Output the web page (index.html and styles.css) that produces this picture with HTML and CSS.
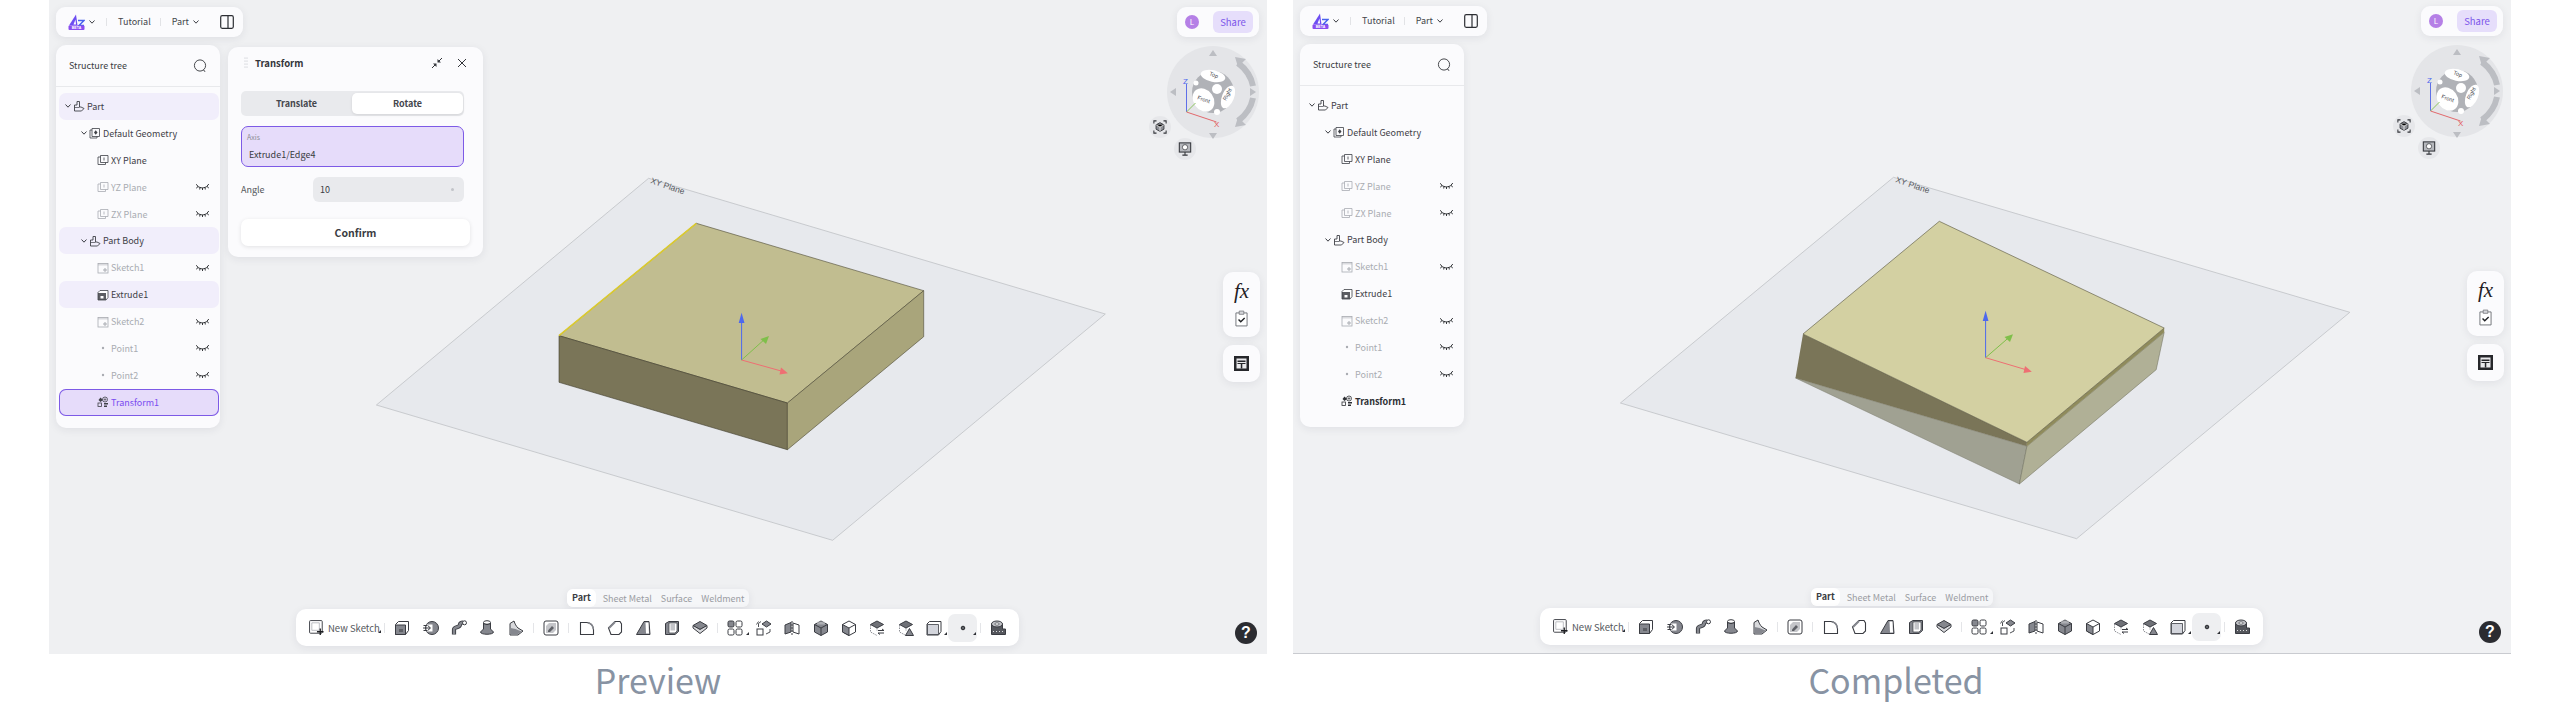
FILE: index.html
```html
<!DOCTYPE html>
<html lang="en">
<head>
<meta charset="utf-8">
<title>Transform preview and completed</title>
<link rel="stylesheet" href="styles.css">
</head>
<body>
<svg class="defs" aria-hidden="true">
  <symbol id="chev" viewBox="0 0 10 10"><path d="M2.5 3.5 5 6.2l2.5-2.7" fill="none" stroke="#3c3e44" stroke-width="1"/></symbol>
  <symbol id="panel" viewBox="0 0 14 14"><rect x=".7" y=".7" width="12.600" height="12.600" rx="1.500" fill="none" stroke="#2d2f34" stroke-width="1.200"/><path d="M8 1v12" stroke="#2d2f34" stroke-width="1.200"/></symbol>
  <symbol id="search" viewBox="0 0 14 14"><circle cx="7" cy="6.500" r="5.600" fill="none" stroke="#33353a" stroke-width=".9"/><path d="m10.500 10.800 1.500 2" stroke="#33353a"/></symbol>
  <symbol id="i-part" viewBox="0 0 12 12"><path d="M1.500 11V5H4V1.500h2.500V7H8l3 1.500L8.500 11z" fill="none" stroke="currentColor" stroke-width=".9"/><path d="M1.500 7.500h5" stroke="currentColor" stroke-width=".7"/></symbol>
  <symbol id="i-geo" viewBox="0 0 12 12"><path d="M3 1.500h7.500v8H3zM1 3h2M1 3v8h7v-1.500" fill="none" stroke="currentColor" stroke-width=".8"/><path d="M5 5.500 6.700 3.200 8.500 5.500 6.700 7.800z" fill="currentColor"/></symbol>
  <symbol id="i-plane" viewBox="0 0 12 12"><path d="M3.500 1.500h7.500v7H3.500zM3.500 3H1v7.500h7.500V8.500" fill="none" stroke="currentColor" stroke-width=".8"/><path d="M7 3.500v3" stroke="currentColor" stroke-width=".8"/></symbol>
  <symbol id="i-sketch" viewBox="0 0 12 12"><rect x="1" y="1.500" width="10" height="9.500" fill="none" stroke="currentColor" stroke-width=".8"/><path d="M1 1.500h10v2H1z" fill="currentColor" opacity=".4"/><path d="M8 6v4M6 8h4" stroke="currentColor"/></symbol>
  <symbol id="i-extrude" viewBox="0 0 12 12"><path d="M1 3.500 3 1.500h8v7l-2 2.500H1z" fill="#fff" stroke="currentColor" stroke-width=".8"/><path d="M1 4h8v7H1z" fill="currentColor" opacity=".85"/><path d="M3.500 7h3v2.500h-3z" fill="#fff"/></symbol>
  <symbol id="i-point" viewBox="0 0 12 12"><circle cx="6" cy="6" r="1.200" fill="currentColor"/></symbol>
  <symbol id="i-transform" viewBox="0 0 12 12"><circle cx="8" cy="3.500" r="2.500" fill="none" stroke="currentColor" stroke-width=".8"/><path d="M6.500 3.500h3M8 2v3" stroke="currentColor" stroke-width=".6"/><rect x="1" y="7" width="3.500" height="3.500" fill="none" stroke="currentColor" stroke-width=".8"/><path d="M3.500 1.500 6 4 3.500 6 1.500 4z" fill="currentColor"/><path d="M7 7h4v1.500H7zM7 9.500h3V11H7z" fill="currentColor"/></symbol>
  <symbol id="eye" viewBox="0 0 13 8"><path d="M1.500 3.200C4.500 5.400 8.500 5.400 11.500 3" fill="none" stroke="#1d1f23" stroke-width=".9"/><path d="M.2 1.200 2 3.400M.2 5.200 2 3.600M4 4.500 3.700 6.500M6.500 5V7M9 4.500 9.300 6.500M12.800 1 11 3.200M12.800 5 11 3.500" stroke="#1d1f23" stroke-width=".9"/></symbol>
  <symbol id="grip" viewBox="0 0 4 12"><g fill="#b9bcc2"><circle cx="1" cy="1" r=".6"/><circle cx="3" cy="1" r=".6"/><circle cx="1" cy="4" r=".6"/><circle cx="3" cy="4" r=".6"/><circle cx="1" cy="7" r=".6"/><circle cx="3" cy="7" r=".6"/><circle cx="1" cy="10" r=".6"/><circle cx="3" cy="10" r=".6"/></g></symbol>
  <symbol id="shrink" viewBox="0 0 12 12"><path d="m1 11 3.500-3.500M11 1 7.500 4.500" stroke="#33353a"/><path d="M2 6.500h3.500V10zM10 5.500H6.500V2z" fill="#33353a"/></symbol>
  <symbol id="close" viewBox="0 0 10 10"><path d="m1 1 8 8M9 1 1 9" stroke="#33353a" stroke-width="1"/></symbol>
  <symbol id="clip" viewBox="0 0 14 18"><path d="M1 3h12v14H1z" fill="#fff" stroke="#6e7076" stroke-width="1"/><path d="M4.500 1h5v3.500h-5z" fill="#d5d6da" stroke="#6e7076" stroke-width=".8"/><path d="m3.800 10 2.400 2.500 4.200-4" fill="none" stroke="#1f2024" stroke-width="1.500"/></symbol>
  <symbol id="table" viewBox="0 0 15 15"><rect width="15" height="15" fill="#26272b"/><path d="M2.500 2.500h10v10h-10z" fill="#e9e9ec"/><path d="M3.500 4.500h8V6h-8zM3.500 7h8v1h-8zM6.800 7h1.500v5.500H6.800z" fill="#26272b"/></symbol>
  <symbol id="fix" viewBox="0 0 16 16"><path d="M1 4V1h3M12 1h3v3M15 12v3h-3M4 15H1v-3" fill="none" stroke="#33353a" stroke-width="1.200"/><path d="m8 3 4.500 2.500v5L8 13l-4.500-2.500v-5z" fill="#8e9096" stroke="#33353a"/><path d="m3.500 5.500 4.500 2.500 4.500-2.500M8 8v5" stroke="#fff" stroke-width=".8"/></symbol>
  <symbol id="screen" viewBox="0 0 16 16"><rect x="1.500" y="1" width="13" height="10.500" fill="#b5b7bc" stroke="#33353a" stroke-width="1.200"/><circle cx="8" cy="6" r="3" fill="#fff" stroke="#33353a" stroke-width=".8"/><path d="M8 11.500V15M5 15h6" stroke="#33353a" stroke-width="1.200"/></symbol>

  <symbol id="t-new" viewBox="0 0 16 16"><rect x=".6" y=".6" width="13.500" height="13.500" rx="1" fill="none" stroke="#3a3c42" stroke-width="1"/><path d="M3 3h8v8H3z" fill="none" stroke="#a8aab0" stroke-width=".8"/><path d="M12 9v7M8.500 12.500h7" stroke="#1d1e22" stroke-width="1.400"/></symbol>
  <symbol id="t-extrude" viewBox="0 0 16 16"><path d="M1.500 4.500 4.500 1.500h10v9l-3 4h-10z" fill="#fff" stroke="#3a3c42"/><path d="M1.500 5h10v9.500h-10z" fill="#85878e" stroke="#3a3c42"/><path d="M5 9h4v3H5z" fill="#5d5f65"/></symbol>
  <symbol id="t-revolve" viewBox="0 0 16 16"><circle cx="9" cy="8" r="6.500" fill="#85878e" stroke="#3a3c42"/><path d="M3.500 4.500h6v7h-6z" fill="#fff"/><path d="M0 8h7M5 5.800 7.500 8 5 10.200M.5 5.500h4M.5 10.500h4" fill="none" stroke="#3a3c42"/></symbol>
  <symbol id="t-sweep" viewBox="0 0 16 16"><path d="M3 14.500v-5c0-3 6-1.500 6-5 0-1 1-2 3-2" fill="none" stroke="#3a3c42" stroke-width="4.200"/><path d="M3 14v-4.500c0-3 6-1.500 6-5 0-1 1-2 3-2" fill="none" stroke="#85878e" stroke-width="2.400"/><circle cx="13.500" cy="2.800" r="2" fill="#fff" stroke="#3a3c42"/></symbol>
  <symbol id="t-loft" viewBox="0 0 16 16"><ellipse cx="8" cy="2.500" rx="3.500" ry="1.800" fill="#fff" stroke="#3a3c42"/><path d="M4.500 3v6L1.500 12c0 3 13 3 13 0l-3-3V3c0 2-7 2-7 0z" fill="#85878e" stroke="#3a3c42"/></symbol>
  <symbol id="t-rib" viewBox="0 0 16 16"><path d="M2 15V3.500L6 1c1 3 2 5 4 7l5 3-5 4z" fill="#d8d9dc" stroke="#3a3c42"/><path d="M2.500 14.500V8l5 1 6 2.500-4 3z" fill="#85878e"/></symbol>
  <symbol id="t-face" viewBox="0 0 16 16"><rect x="1" y="1" width="14" height="14" rx="2" fill="#fff" stroke="#3a3c42"/><path d="M3 13V6l3-3h7v7l-3 3z" fill="#c4c5c9"/><path d="M5 10.500 9 6l2 2-4 4H5z" fill="#5f6167"/></symbol>
  <symbol id="t-fillet" viewBox="0 0 16 16"><path d="M1.500 14.500V2.500h6c4 0 7 3 7 7v5H4z" fill="#fff" stroke="#3a3c42" stroke-width="1.100"/><path d="M9 2.800c3 .7 5 3 5.400 6.500" fill="none" stroke="#85878e" stroke-width="1.400"/></symbol>
  <symbol id="t-chamfer" viewBox="0 0 16 16"><path d="M1.500 8 8 1.500h5l1.500 2.500v8L12 14.500H4z" fill="#fff" stroke="#3a3c42" stroke-width="1.100"/><path d="M8 2 2 8" stroke="#85878e" stroke-width="2"/></symbol>
  <symbol id="t-draft" viewBox="0 0 16 16"><path d="M9 1.500h5l1 13H1.500z" fill="#85878e" stroke="#3a3c42"/><path d="M10.500 2.500h3l.5 11h-3z" fill="#fff"/></symbol>
  <symbol id="t-shell" viewBox="0 0 16 16"><path d="M1.500 3.500 5 1.500h9.500v10L11 14.500H1.500z" fill="#85878e" stroke="#3a3c42"/><path d="M5 3h8v8l-2 2H5z" fill="#fff" stroke="#3a3c42" stroke-width=".7"/><path d="M6.500 4H11v6.500H6.500z" fill="#c4c5c9"/></symbol>
  <symbol id="t-plane" viewBox="0 0 16 16"><path d="m8 1.500 7 4-7 4-7-4z" fill="#85878e" stroke="#3a3c42"/><path d="M1 5.500V8l7 5.500L15 8V5.500l-7 4z" fill="#d8d9dc" stroke="#3a3c42"/></symbol>
  <symbol id="t-pattern" viewBox="0 0 16 16"><rect x="1" y="1" width="6" height="6" rx="1.500" fill="#85878e" stroke="#3a3c42"/><rect x="9" y="1" width="6" height="6" rx="1.500" fill="#fff" stroke="#3a3c42"/><rect x="1" y="9" width="6" height="6" rx="1.500" fill="#fff" stroke="#3a3c42"/><rect x="9" y="9" width="6" height="6" rx="1.500" fill="#fff" stroke="#3a3c42"/></symbol>
  <symbol id="t-bool" viewBox="0 0 16 16"><path d="m10.500 1 4.500 3-4.500 3L6 4z" fill="#85878e" stroke="#3a3c42"/><rect x="1" y="9" width="6" height="6" fill="#fff" stroke="#3a3c42"/><path d="M2.500 7V3.500L5 1.500M2.500 1.500l-2 3M14 9v3l-4 2" fill="none" stroke="#3a3c42" stroke-width=".9"/></symbol>
  <symbol id="t-mirror" viewBox="0 0 16 16"><path d="M1 5 7 2.500v9.500L1 14z" fill="#85878e" stroke="#3a3c42"/><path d="M15 5 9 3v9l6 2z" fill="#fff" stroke="#3a3c42"/><path d="M8 1v14" stroke="#3a3c42" stroke-dasharray="2 1"/></symbol>
  <symbol id="t-cube-g" viewBox="0 0 16 16"><path d="m8 1 6.500 3.500v7.500L8 15.500 1.500 12V4.500z" fill="#85878e" stroke="#3a3c42"/><path d="m1.500 4.500 6.500 3.500 6.500-3.500M8 8v7.500" fill="none" stroke="#3a3c42"/><path d="M4 1.500h8v3H4z" fill="#d8d9dc" opacity=".5"/></symbol>
  <symbol id="t-cube-w" viewBox="0 0 16 16"><path d="m8 1 6.500 3.500v7.500L8 15.500 1.500 12V4.500z" fill="#fff" stroke="#3a3c42"/><path d="M1.500 4.500 8 8v7.500L1.500 12z" fill="#85878e" stroke="#3a3c42"/><path d="M8 8l6.500-3.500" stroke="#3a3c42"/></symbol>
  <symbol id="t-cube-swap" viewBox="0 0 16 16"><path d="m8 1 6.500 3.500L8 8 1.500 4.500z" fill="#6f7177" stroke="#3a3c42"/><path d="M1.500 5v7L8 15.500M8 8v3" fill="none" stroke="#8e9096" stroke-dasharray="1.500 1"/><path d="M9 10.500h6M13 9l2 1.500M15 13H9M11 14.500 9 13" fill="none" stroke="#3a3c42"/></symbol>
  <symbol id="t-cube-warn" viewBox="0 0 16 16"><path d="m8 1 6.500 3.500L8 8 1.500 4.500z" fill="#6f7177" stroke="#3a3c42"/><path d="M1.500 5v7L8 15.500M8 8v3" fill="none" stroke="#8e9096" stroke-dasharray="1.500 1"/><path d="m11.500 8.500 4 7h-8z" fill="#85878e" stroke="#3a3c42"/></symbol>
  <symbol id="t-box" viewBox="0 0 16 16"><path d="M1 4 3.500 1.500H15v10l-2.500 3.500H1z" fill="#fff" stroke="#3a3c42"/><path d="M1.500 4.500h11V14.500h-11z" fill="#d3d5dc" stroke="#3a3c42" stroke-width=".8"/></symbol>
  <symbol id="t-dot" viewBox="0 0 16 16"><circle cx="8" cy="8" r="1.800" fill="#5f6167" stroke="#26282c"/></symbol>
  <symbol id="t-measure" viewBox="0 0 16 16"><path d="M1.500 4v10.500H15.500V9H12.500V4z" fill="#55575d" stroke="#3a3c42"/><ellipse cx="7" cy="4" rx="5.500" ry="3" fill="#c4c5c9" stroke="#3a3c42"/><ellipse cx="7" cy="4" rx="2.200" ry="1.200" fill="#fff" stroke="#3a3c42" stroke-width=".7"/><path d="M3 11.500h1M6 11.500h1M9 11.500h1M12 11.500h1" stroke="#fff" stroke-width=".8"/></symbol>
</svg>

<main class="page">
  <section class="figure">
    <div class="viewer">
      <svg class="scene" viewBox="49 0 1218 654">
        <path class="plane" d="M648.600 178.300 1105.300 314 832.600 540.300 376.400 405z"/>
        <text class="plane-label" transform="translate(650 183) rotate(19)">XY Plane</text>
        <path class="face-top" d="M696.300 223.300 923.700 290.700 787.400 403 559 335.700z"/>
        <path class="face-left" d="M559 335.700 787.400 403V449.700L559 382.300z"/>
        <path class="face-right" d="M923.700 290.700 787.400 403V449.700L923.700 336.700z"/>
        <path class="edge-hi" d="M696.300 223.300 559 335.700"/>
        <path class="axis-b" d="M741.600 360V318"/><path class="head-b" d="M741.600 312.700 744.500 323H738.700z"/>
        <path class="axis-g" d="M741.600 360 766 338"/><path class="head-g" d="M769 336 766 344 760.500 339z"/>
        <path class="axis-r" d="M741.600 360 783 371.500"/><path class="head-r" d="M787.900 373.300 779.500 374.500 781 367.500z"/>
      </svg>

      <header class="bar topbar">
        <svg class="logo" viewBox="0 0 17 16"><path d="M1 11.500 8 .5 9.500 11.500z" fill="#6d4df2"/><path d="M5.500 10.500 7.500 5.500 8 10.500z" fill="#fff"/><path d="M10 6.500h6l-5 5h5" fill="none" stroke="#4a63ee" stroke-width="1.500"/><rect x=".5" y="11.500" width="16" height="4.500" rx="1" fill="#8a4cf0"/><text class="logo-text" x="8.500" y="15">BETA</text></svg>
        <svg class="chev"><use href="#chev"/></svg>
        <i class="vsep"></i>
        <span class="crumb">Tutorial</span>
        <i class="vsep"></i>
        <span class="crumb">Part</span>
        <svg class="chev"><use href="#chev"/></svg>
        <svg class="panel-ic"><use href="#panel"/></svg>
      </header>

      <aside class="tree">
        <div class="tree-head"><span>Structure tree</span><svg class="search"><use href="#search"/></svg></div>
        <div class="tree-list">
          <div class="row d0 hl"><svg class="chev"><use href="#chev"/></svg><svg class="ic"><use href="#i-part"/></svg><span>Part</span></div>
          <div class="row d1"><svg class="chev"><use href="#chev"/></svg><svg class="ic"><use href="#i-geo"/></svg><span>Default Geometry</span></div>
          <div class="row d2"><svg class="ic"><use href="#i-plane"/></svg><span>XY Plane</span></div>
          <div class="row d2 dim"><svg class="ic"><use href="#i-plane"/></svg><span>YZ Plane</span><svg class="eye"><use href="#eye"/></svg></div>
          <div class="row d2 dim"><svg class="ic"><use href="#i-plane"/></svg><span>ZX Plane</span><svg class="eye"><use href="#eye"/></svg></div>
          <div class="row d1 hl"><svg class="chev"><use href="#chev"/></svg><svg class="ic"><use href="#i-part"/></svg><span>Part Body</span></div>
          <div class="row d2 dim"><svg class="ic"><use href="#i-sketch"/></svg><span>Sketch1</span><svg class="eye"><use href="#eye"/></svg></div>
          <div class="row d2 hl"><svg class="ic"><use href="#i-extrude"/></svg><span>Extrude1</span></div>
          <div class="row d2 dim"><svg class="ic"><use href="#i-sketch"/></svg><span>Sketch2</span><svg class="eye"><use href="#eye"/></svg></div>
          <div class="row d2 dim"><svg class="ic"><use href="#i-point"/></svg><span>Point1</span><svg class="eye"><use href="#eye"/></svg></div>
          <div class="row d2 dim"><svg class="ic"><use href="#i-point"/></svg><span>Point2</span><svg class="eye"><use href="#eye"/></svg></div>
          <div class="row d2 sel"><svg class="ic"><use href="#i-transform"/></svg><span>Transform1</span></div>
        </div>
      </aside>

      <section class="dialog">
        <div class="dialog-head">
          <svg class="grip"><use href="#grip"/></svg>
          <strong>Transform</strong>
          <svg class="shrink"><use href="#shrink"/></svg>
          <svg class="close"><use href="#close"/></svg>
        </div>
        <div class="segment"><span>Translate</span><span class="on">Rotate</span></div>
        <div class="axis-field"><small>Axis</small><span>Extrude1/Edge4</span></div>
        <div class="angle"><label>Angle</label><div class="angle-input"><span>10</span><i></i></div></div>
        <button class="confirm">Confirm</button>
      </section>

      <div class="bar share-bar"><span class="avatar">L</span><span class="share">Share</span></div>

      <svg class="nav" viewBox="1149 40 118 120">
        <circle cx="1213" cy="92" r="46" fill="#e4e5e8"/>
        <g fill="#bcbec3"><path d="M1213 50l4 6h-8zM1213 139l4-6h-8zM1170 92l6-4v8zM1256 92l-6-4v8z"/></g>
        <path d="M1238 63c8 6 13 13 15 23M1253 98c-2 10-7 17-15 23" fill="none" stroke="#bcbec3" stroke-width="6"/>
        <path d="M1235 57l11 2-8 8zM1235 127l11-2-8-8z" fill="#bcbec3"/>
        <circle cx="1213" cy="92" r="21" fill="#b0b2b7"/>
        <g fill="#fff"><ellipse cx="1213" cy="76" rx="12.500" ry="5.800" transform="rotate(12 1213 76)"/><ellipse cx="1203.500" cy="100" rx="10" ry="12.500" transform="rotate(-35 1203.500 100)"/><ellipse cx="1228" cy="97" rx="6" ry="12" transform="rotate(22 1228 97)"/><circle cx="1217" cy="89" r="5"/><circle cx="1196" cy="83" r="2.500"/><circle cx="1217" cy="112" r="3"/></g>
        <g class="cube-label"><text transform="translate(1209 75) rotate(22)">Top</text><text transform="translate(1197 99) rotate(20)">Front</text><text transform="translate(1226 101) rotate(-62)">Right</text></g>
        <path d="M1186.500 112V84" stroke="#5f70e8"/><path d="M1186.500 112l9-9" stroke="#8cc45e"/><path d="M1186.500 112l30 10" stroke="#e2696d"/>
        <text class="ax-z" x="1183" y="84">Z</text><text class="ax-x" x="1214" y="127">X</text>
      </svg>
      <div class="round fix-btn"><svg><use href="#fix"/></svg></div>
      <div class="round screen-btn"><svg><use href="#screen"/></svg></div>

      <div class="tools tools-a"><span class="fx">fx</span><svg class="clip"><use href="#clip"/></svg></div>
      <div class="tools tools-b"><svg class="table"><use href="#table"/></svg></div>

      <div class="dock">
        <div class="tabs"><span class="on">Part</span><span>Sheet Metal</span><span>Surface</span><span>Weldment</span></div>
        <div class="toolbar">
          <div class="new"><svg><use href="#t-new"/></svg><span>New Sketch</span><i class="caret"></i></div>
          <i class="tsep"></i>
          <div class="tb"><svg><use href="#t-extrude"/></svg></div>
          <div class="tb"><svg><use href="#t-revolve"/></svg></div>
          <div class="tb"><svg><use href="#t-sweep"/></svg></div>
          <div class="tb"><svg><use href="#t-loft"/></svg></div>
          <div class="tb"><svg><use href="#t-rib"/></svg></div>
          <i class="tsep"></i>
          <div class="tb"><svg><use href="#t-face"/></svg></div>
          <i class="tsep"></i>
          <div class="tb"><svg><use href="#t-fillet"/></svg></div>
          <div class="tb"><svg><use href="#t-chamfer"/></svg></div>
          <div class="tb"><svg><use href="#t-draft"/></svg></div>
          <div class="tb"><svg><use href="#t-shell"/></svg></div>
          <div class="tb"><svg><use href="#t-plane"/></svg></div>
          <i class="tsep"></i>
          <div class="tb"><svg><use href="#t-pattern"/></svg><i class="caret"></i></div>
          <div class="tb"><svg><use href="#t-bool"/></svg></div>
          <div class="tb"><svg><use href="#t-mirror"/></svg></div>
          <div class="tb"><svg><use href="#t-cube-g"/></svg></div>
          <div class="tb"><svg><use href="#t-cube-w"/></svg></div>
          <div class="tb"><svg><use href="#t-cube-swap"/></svg></div>
          <div class="tb"><svg><use href="#t-cube-warn"/></svg></div>
          <div class="tb"><svg><use href="#t-box"/></svg><i class="caret"></i></div>
          <div class="tb hover"><svg><use href="#t-dot"/></svg><i class="caret"></i></div>
          <i class="tsep"></i>
          <div class="tb"><svg><use href="#t-measure"/></svg></div>
        </div>
      </div>
      <div class="help">?</div>
    </div>
    <p class="caption">Preview</p>
  </section>

  <section class="figure second">
    <div class="viewer">
      <svg class="scene" viewBox="1293 0 1218 654">
        <path class="plane" d="M1893.500 178.300 2349.800 313.300 2076.600 539.700 1620.400 404z"/>
        <text class="plane-label" transform="translate(1895 183) rotate(19)">XY Plane</text>
        <path class="c-low" d="M1795.500 379 2019.400 485 2026.900 447.300z"/>
        <path class="c-right" d="M2026.900 447.300 2019.400 485 2156.200 370.700 2164.200 333.300z"/>
        <path class="c-left" d="M1803 335 1795.500 379 2026.900 447.300 2026.900 443.300z"/>
        <path class="c-strip" d="M2026.900 443.300 2164.200 329V333.300L2026.900 447.300z"/>
        <path class="c-top" d="M1939.300 222.300 2164.200 329 2026.900 443.300 1803 335z"/>
        <path class="axis-b" d="M1985.600 358.700V317"/><path class="head-b" d="M1985.600 311.700 1988.500 322H1982.700z"/>
        <path class="axis-g" d="M1985.600 358.700 2010 337.500"/><path class="head-g" d="M2013 335.300 2010 343 2004.500 338z"/>
        <path class="axis-r" d="M1985.600 358.700 2027 371"/><path class="head-r" d="M2031.800 372.700 2023.500 374 2025 367z"/>
      </svg>

      <header class="bar topbar">
        <svg class="logo" viewBox="0 0 17 16"><path d="M1 11.500 8 .5 9.500 11.500z" fill="#6d4df2"/><path d="M5.500 10.500 7.500 5.500 8 10.500z" fill="#fff"/><path d="M10 6.500h6l-5 5h5" fill="none" stroke="#4a63ee" stroke-width="1.500"/><rect x=".5" y="11.500" width="16" height="4.500" rx="1" fill="#8a4cf0"/><text class="logo-text" x="8.500" y="15">BETA</text></svg>
        <svg class="chev"><use href="#chev"/></svg>
        <i class="vsep"></i>
        <span class="crumb">Tutorial</span>
        <i class="vsep"></i>
        <span class="crumb">Part</span>
        <svg class="chev"><use href="#chev"/></svg>
        <svg class="panel-ic"><use href="#panel"/></svg>
      </header>

      <aside class="tree">
        <div class="tree-head"><span>Structure tree</span><svg class="search"><use href="#search"/></svg></div>
        <div class="tree-list">
          <div class="row d0"><svg class="chev"><use href="#chev"/></svg><svg class="ic"><use href="#i-part"/></svg><span>Part</span></div>
          <div class="row d1"><svg class="chev"><use href="#chev"/></svg><svg class="ic"><use href="#i-geo"/></svg><span>Default Geometry</span></div>
          <div class="row d2"><svg class="ic"><use href="#i-plane"/></svg><span>XY Plane</span></div>
          <div class="row d2 dim"><svg class="ic"><use href="#i-plane"/></svg><span>YZ Plane</span><svg class="eye"><use href="#eye"/></svg></div>
          <div class="row d2 dim"><svg class="ic"><use href="#i-plane"/></svg><span>ZX Plane</span><svg class="eye"><use href="#eye"/></svg></div>
          <div class="row d1"><svg class="chev"><use href="#chev"/></svg><svg class="ic"><use href="#i-part"/></svg><span>Part Body</span></div>
          <div class="row d2 dim"><svg class="ic"><use href="#i-sketch"/></svg><span>Sketch1</span><svg class="eye"><use href="#eye"/></svg></div>
          <div class="row d2"><svg class="ic"><use href="#i-extrude"/></svg><span>Extrude1</span></div>
          <div class="row d2 dim"><svg class="ic"><use href="#i-sketch"/></svg><span>Sketch2</span><svg class="eye"><use href="#eye"/></svg></div>
          <div class="row d2 dim"><svg class="ic"><use href="#i-point"/></svg><span>Point1</span><svg class="eye"><use href="#eye"/></svg></div>
          <div class="row d2 dim"><svg class="ic"><use href="#i-point"/></svg><span>Point2</span><svg class="eye"><use href="#eye"/></svg></div>
          <div class="row d2 strong"><svg class="ic"><use href="#i-transform"/></svg><span>Transform1</span></div>
        </div>
      </aside>

      <div class="bar share-bar"><span class="avatar">L</span><span class="share">Share</span></div>

      <svg class="nav" viewBox="1149 40 118 120">
        <circle cx="1213" cy="92" r="46" fill="#e4e5e8"/>
        <g fill="#bcbec3"><path d="M1213 50l4 6h-8zM1213 139l4-6h-8zM1170 92l6-4v8zM1256 92l-6-4v8z"/></g>
        <path d="M1238 63c8 6 13 13 15 23M1253 98c-2 10-7 17-15 23" fill="none" stroke="#bcbec3" stroke-width="6"/>
        <path d="M1235 57l11 2-8 8zM1235 127l11-2-8-8z" fill="#bcbec3"/>
        <circle cx="1213" cy="92" r="21" fill="#b0b2b7"/>
        <g fill="#fff"><ellipse cx="1213" cy="76" rx="12.500" ry="5.800" transform="rotate(12 1213 76)"/><ellipse cx="1203.500" cy="100" rx="10" ry="12.500" transform="rotate(-35 1203.500 100)"/><ellipse cx="1228" cy="97" rx="6" ry="12" transform="rotate(22 1228 97)"/><circle cx="1217" cy="89" r="5"/><circle cx="1196" cy="83" r="2.500"/><circle cx="1217" cy="112" r="3"/></g>
        <g class="cube-label"><text transform="translate(1209 75) rotate(22)">Top</text><text transform="translate(1197 99) rotate(20)">Front</text><text transform="translate(1226 101) rotate(-62)">Right</text></g>
        <path d="M1186.500 112V84" stroke="#5f70e8"/><path d="M1186.500 112l9-9" stroke="#8cc45e"/><path d="M1186.500 112l30 10" stroke="#e2696d"/>
        <text class="ax-z" x="1183" y="84">Z</text><text class="ax-x" x="1214" y="127">X</text>
      </svg>
      <div class="round fix-btn"><svg><use href="#fix"/></svg></div>
      <div class="round screen-btn"><svg><use href="#screen"/></svg></div>

      <div class="tools tools-a"><span class="fx">fx</span><svg class="clip"><use href="#clip"/></svg></div>
      <div class="tools tools-b"><svg class="table"><use href="#table"/></svg></div>

      <div class="dock">
        <div class="tabs"><span class="on">Part</span><span>Sheet Metal</span><span>Surface</span><span>Weldment</span></div>
        <div class="toolbar">
          <div class="new"><svg><use href="#t-new"/></svg><span>New Sketch</span><i class="caret"></i></div>
          <i class="tsep"></i>
          <div class="tb"><svg><use href="#t-extrude"/></svg></div>
          <div class="tb"><svg><use href="#t-revolve"/></svg></div>
          <div class="tb"><svg><use href="#t-sweep"/></svg></div>
          <div class="tb"><svg><use href="#t-loft"/></svg></div>
          <div class="tb"><svg><use href="#t-rib"/></svg></div>
          <i class="tsep"></i>
          <div class="tb"><svg><use href="#t-face"/></svg></div>
          <i class="tsep"></i>
          <div class="tb"><svg><use href="#t-fillet"/></svg></div>
          <div class="tb"><svg><use href="#t-chamfer"/></svg></div>
          <div class="tb"><svg><use href="#t-draft"/></svg></div>
          <div class="tb"><svg><use href="#t-shell"/></svg></div>
          <div class="tb"><svg><use href="#t-plane"/></svg></div>
          <i class="tsep"></i>
          <div class="tb"><svg><use href="#t-pattern"/></svg><i class="caret"></i></div>
          <div class="tb"><svg><use href="#t-bool"/></svg></div>
          <div class="tb"><svg><use href="#t-mirror"/></svg></div>
          <div class="tb"><svg><use href="#t-cube-g"/></svg></div>
          <div class="tb"><svg><use href="#t-cube-w"/></svg></div>
          <div class="tb"><svg><use href="#t-cube-swap"/></svg></div>
          <div class="tb"><svg><use href="#t-cube-warn"/></svg></div>
          <div class="tb"><svg><use href="#t-box"/></svg><i class="caret"></i></div>
          <div class="tb hover"><svg><use href="#t-dot"/></svg><i class="caret"></i></div>
          <i class="tsep"></i>
          <div class="tb"><svg><use href="#t-measure"/></svg></div>
        </div>
      </div>
      <div class="help">?</div>
    </div>
    <p class="caption">Completed</p>
  </section>
</main>
</body>
</html>
```
FILE: styles.css
```css
* { box-sizing: border-box; }
html, body { margin: 0; height: 100%; background: #fff; overflow: hidden; }
body { font-family: "Noto Sans CJK SC", "Noto Sans", sans-serif; color: #3a3c42; }
.defs { position: absolute; width: 0; height: 0; }

.page { display: flex; gap: 26px; padding-left: 49px; }
.figure { width: 1218px; flex: none; }
.second { margin-top: -1px; }
.viewer { position: relative; height: 654px; background: #eff0f2; overflow: hidden; }
.second .viewer { background: #f0f1f3; border-bottom: 1px solid #c9cbd0; height: 655px; }
.caption { margin: 0; padding-top: 1px; text-align: center; font-size: 34px; line-height: 50px; font-weight: 400; color: #8893a3; }
.second .caption { padding-right: 12px; }

/* 3D scene */
.scene { position: absolute; inset: 0; width: 100%; height: 100%; }
.plane { fill: #e7e9ed; stroke: #bfc1c5; stroke-width: .8; }
.plane-label { font-size: 8.500px; fill: #55575c; font-family: "Liberation Sans", sans-serif; }
.face-top { fill: #c1bd90; stroke: #4d4a36; stroke-width: .6; }
.face-left { fill: #7a7558; stroke: #3f3d2c; stroke-width: .6; }
.face-right { fill: #a9a57b; stroke: #4d4a36; stroke-width: .6; }
.edge-hi { stroke: #dccb2e; stroke-width: 1.6; fill: none; }
.c-top { fill: #d3d0a2; stroke: #55533a; stroke-width: .6; }
.c-left { fill: #7a7558; }
.c-strip { fill: #8f8b5c; }
.c-right { fill: #b0b096; stroke: #6b6b58; stroke-width: .5; }
.c-low { fill: #a0a192; stroke: #7a7a6c; stroke-width: .5; }
.axis-b { stroke: #4d68ee; stroke-width: 1; }
.axis-g { stroke: #7fbf4a; stroke-width: 1; }
.axis-r { stroke: #ee6f73; stroke-width: 1; }
.head-b { fill: #4d68ee; }
.head-g { fill: #7fbf4a; }
.head-r { fill: #ee6f73; }

/* shared floating cards */
.bar, .tree, .dialog, .tools, .toolbar, .tabs { background: #fbfbfd; box-shadow: 0 2px 8px rgba(40, 44, 60, .08); }
.bar { position: absolute; top: 7px; height: 30px; border-radius: 9px; display: flex; align-items: center; }

/* top left */
.topbar { left: 7px; width: 187px; padding-left: 12px; font-size: 9px; }
.logo { width: 17px; height: 16px; flex: none; }
.logo-text { font: 700 3.600px "Liberation Sans", sans-serif; fill: #fff; text-anchor: middle; }
.chev { width: 10px; height: 10px; flex: none; }
.topbar .chev { margin-left: 2px; }
.vsep { width: 1px; height: 8px; background: #e2e3e6; flex: none; margin: 0 11px 0 9px; }
.crumb { color: #44464c; line-height: 12px; }
.panel-ic { width: 14px; height: 14px; margin-left: auto; margin-right: 9px; flex: none; }

/* tree */
.tree { position: absolute; left: 7px; top: 45px; width: 164px; height: 383px; border-radius: 10px; }
.tree-head { height: 42px; padding: 0 13px; border-bottom: 1px solid #e8e9ec; display: flex; align-items: center; justify-content: space-between; font-size: 9px; color: #3a3c42; }
.search { width: 14px; height: 14px; }
.tree-list { padding: 6px 1px 0 3px; }
.row { height: 26.900px; display: flex; align-items: center; border-radius: 7px; font-size: 9px; color: #3f4147; }
.row .ic { width: 12px; height: 12px; flex: none; margin-right: 2px; }
.row .eye { width: 13px; height: 8px; margin-left: auto; margin-right: 10px; flex: none; }
.d0 { padding-left: 4px; }
.d1 { padding-left: 20px; }
.d2 { padding-left: 38px; }
.hl { background: #f1eefb; }
.dim { color: #a9acb2; }
.sel { background: #e6dcfa; box-shadow: inset 0 0 0 1px #7d5ae6; color: #7a4df0; }
.sel .ic { color: #3f4147; }
.strong { font-weight: 700; color: #2d2f34; }

/* dialog */
.dialog { position: absolute; left: 179px; top: 47px; width: 255px; height: 210px; border-radius: 10px; padding: 0 13px; font-size: 9px; }
.dialog-head { height: 32px; margin-right: -2px; display: flex; align-items: center; gap: 5px; }
.grip { width: 4px; height: 12px; margin-left: 3px; }
.dialog-head strong { font-weight: 700; font-size: 9.500px; color: #33353a; margin-left: 2px; }
.shrink { width: 12px; height: 12px; margin-left: auto; margin-right: 9px; }
.close { width: 10px; height: 10px; margin-right: 5px; }
.segment { margin-top: 12px; height: 25px; width: 223px; background: #e9eaed; border-radius: 5px; padding: 2px 1px 2px 0; display: flex; font-weight: 700; }
.segment span { flex: 1; display: flex; align-items: center; justify-content: center; color: #44464c; border-radius: 5px; }
.segment .on { background: #fff; box-shadow: 0 1px 3px rgba(0, 0, 0, .1); }
.axis-field { margin-top: 10px; width: 223px; height: 41px; background: #e6dcfa; border: 1px solid #7d5ae6; border-radius: 7px; padding: 5px 0 0 5px; display: flex; flex-direction: column; }
.axis-field small { font-size: 7px; line-height: 10px; color: #8a8c92; }
.axis-field span { margin: 6px 0 0 2px; line-height: 14px; color: #3a3c42; }
.angle { margin-top: 10px; display: flex; align-items: center; }
.angle label { width: 72px; color: #55575c; }
.angle-input { width: 151px; height: 25px; background: #e9eaed; border-radius: 6px; display: flex; align-items: center; justify-content: space-between; padding: 0 10px 0 7px; }
.angle-input i { width: 3px; height: 3px; border-radius: 50%; background: #c2c4c9; }
.confirm { display: block; margin-top: 17px; width: 229px; height: 27px; border: 0; border-radius: 7px; background: #fff; box-shadow: 0 1px 4px rgba(0, 0, 0, .1); font: 700 10.500px "Noto Sans CJK SC", "Noto Sans", sans-serif; color: #3a3c42; }

/* top right */
.share-bar { right: 8px; width: 82px; padding: 0 6px 0 8px; justify-content: space-between; }
.avatar { width: 14px; height: 14px; border-radius: 50%; background: #b580e6; color: #fff; font-size: 8px; line-height: 14px; text-align: center; }
.share { width: 40px; height: 22px; border-radius: 6px; background: #e6defb; color: #7b55ea; font-size: 9.500px; line-height: 22px; text-align: center; }

/* nav cube */
.nav { position: absolute; right: 0; top: 40px; width: 118px; height: 120px; }
.cube-label { font-size: 5.500px; fill: #44464c; font-family: "Liberation Sans", sans-serif; }
.ax-z { font-size: 8px; fill: #4d68ee; font-family: "Liberation Sans", sans-serif; }
.ax-x { font-size: 8px; fill: #e2555a; font-family: "Liberation Sans", sans-serif; }
.round { position: absolute; width: 22px; height: 22px; border-radius: 50%; background: #e6e7ea; display: flex; align-items: center; justify-content: center; }
.round svg { width: 14px; height: 14px; }
.fix-btn { left: 1100px; top: 116px; }
.screen-btn { left: 1125px; top: 138px; }

/* right tools */
.tools { position: absolute; right: 7px; width: 37px; border-radius: 10px; display: flex; flex-direction: column; align-items: center; }
.tools-a { top: 272px; height: 65px; padding-top: 6px; }
.tools-b { top: 345px; height: 37px; justify-content: center; }
.fx { font: italic 400 21px/26px "Liberation Serif", serif; color: #1f2024; }
.clip { width: 13px; height: 17px; margin-top: 6px; }
.table { width: 15px; height: 15px; }

/* bottom */
.dock { position: absolute; left: 247px; top: 589px; width: 723px; display: flex; flex-direction: column; gap: 2px; }
.tabs { align-self: flex-start; margin-left: 271px; height: 18px; border-radius: 6px; background: #f5f6f8; display: flex; align-items: center; font-size: 9px; color: #9a9ca2; padding-right: 4px; gap: 9px; }
.tabs .on { background: #fff; color: #3a3c42; font-weight: 700; height: 18px; line-height: 18px; padding: 0 5px; border-radius: 6px; margin-right: -2px; }
.toolbar { height: 37px; border-radius: 10px; background: #fff; display: flex; align-items: center; padding-left: 13px; }
.new { display: flex; align-items: center; width: 72px; flex: none; position: relative; font-size: 9.500px; color: #55575c; white-space: nowrap; }
.new svg { width: 15px; height: 15px; margin-right: 4px; flex: none; }
.tsep { width: 1px; height: 10px; background: #e4e5e8; margin: 0 3px; flex: none; }
.tb { position: relative; width: 28.400px; height: 28px; flex: none; display: flex; align-items: center; justify-content: center; border-radius: 7px; }
.tb svg { width: 16px; height: 16px; }
.hover { background: #eeeff1; }
.caret { position: absolute; right: 1px; bottom: 7px; width: 0; height: 0; border-left: 3px solid transparent; border-bottom: 3px solid #2d2f34; }
.new .caret { right: 0; bottom: 2px; }
.help { position: absolute; right: 10px; top: 622px; width: 22px; height: 22px; border-radius: 50%; background: #2b2c31; color: #fff; font: 700 16px/22px "Liberation Sans", sans-serif; text-align: center; }
```
